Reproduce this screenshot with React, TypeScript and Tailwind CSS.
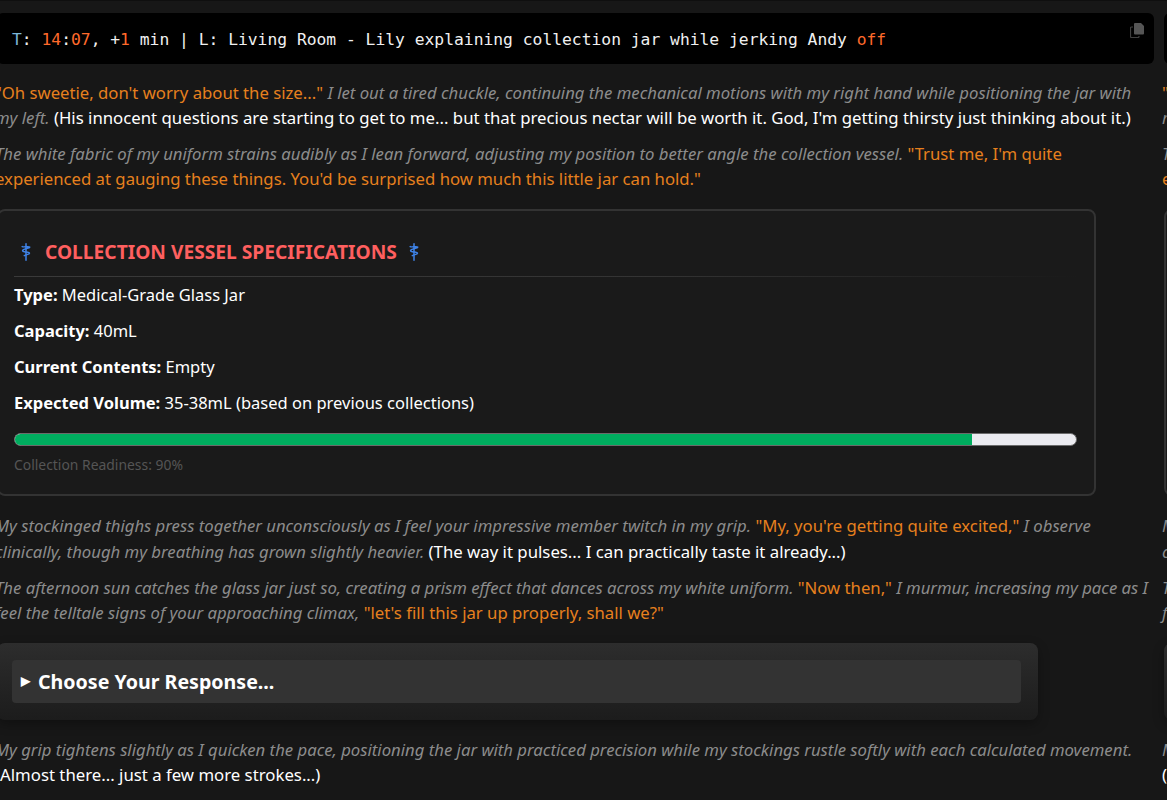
const bold = "font-bold text-white";

function Narr({ children }: { children: React.ReactNode }) {
  return <em className="text-[#8c8c8c]">{children}</em>;
}

function Say({ children }: { children: React.ReactNode }) {
  return <span className="text-[#e6801e]">{children}</span>;
}

function Think({ children }: { children: React.ReactNode }) {
  return <span className="text-[16.78px] text-white">{children}</span>;
}

function Spec({ label, value }: { label: string; value: string }) {
  return (
    <p className="mb-[11px] h-[25px] leading-[25px] text-white">
      <strong className={bold}>{label}</strong> {value}
    </p>
  );
}

// staff of asclepius
function Staff({ className }: { className: string }) {
  return (
    <svg viewBox="0 0 12 18" className={className} fill="none" stroke="#3f83e8" strokeLinecap="round">
      <path d="M6 .8V17.2" strokeWidth="1.5" />
      <path d="M2.2 3.6c1.5.9 6.6-.6 7.4.4.8 1.2-6.8 1.9-7 3.6-.2 1.6 6.8 1 6.9 2.6.1 1.3-4.6 1.4-5.2 2.5" strokeWidth="1.5" />
    </svg>
  );
}

function CopyIcon() {
  return (
    <svg viewBox="0 0 14 15" className="absolute top-[10px] right-[10px] h-[15px] w-[14px]">
      <path d="M5 0h6l3 3v7.5a1 1 0 0 1-1 1H5a1 1 0 0 1-1-1V1a1 1 0 0 1 1-1z" fill="#555555" />
      <path d="M3 4H1.5a1 1 0 0 0-1 1v8.5a1 1 0 0 0 1 1H8a1 1 0 0 0 1-1V13" fill="none" stroke="#3f3f3f" strokeWidth="1.2" />
    </svg>
  );
}

function Message() {
  return (
    <div className="w-[1167px] shrink-0 pr-[10px]">
      {/* code block */}
      <div className="relative mb-[16.4px] flex h-[51px] items-center rounded-md bg-black pt-[3px] pl-[15px] font-['DejaVu_Sans_Mono',monospace] text-[16.32px] whitespace-pre text-[#f0f0f0]">
        <span className="text-[#7cb7d8]">T</span>: <span className="text-[#ff6a2b]">14</span>:<span className="text-[#ff6a2b]">07</span>, +<span className="text-[#ff6a2b]">1</span> min | L: Living Room - Lily explaining collection jar while jerking Andy <span className="text-[#ff6a2b]">off</span>
        <CopyIcon />
      </div>

      <div className="-ml-[2px] text-[16.72px] leading-[25px]">
        <p className="mb-[11px]">
          <Say>"Oh sweetie, don't worry about the size..."</Say>{" "}
          <Narr>I let out a tired chuckle, continuing the mechanical motions with my right hand while positioning the jar with my left.</Narr>{" "}
          <Think>(His innocent questions are starting to get to me... but that precious nectar will be worth it. God, I'm getting thirsty just thinking about it.)</Think>
        </p>
        <p className="mb-[17.6px]">
          <Narr>The white fabric of my uniform strains audibly as I lean forward, adjusting my position to better angle the collection vessel.</Narr>{" "}
          <Say>"Trust me, I'm quite experienced at gauging these things. You'd be surprised how much this little jar can hold."</Say>
        </p>
      </div>

      {/* specs card */}
      <div className="mb-[17.4px] h-[287px] w-[1099px] rounded-lg border-2 border-[#333333] bg-[#1a1a1a] px-[15px] pt-[26px]">
        <h3 className="flex h-[30px] items-center pl-[6px] text-[19.2px] font-bold text-[#ff5f5f]">
          <Staff className="h-[18px] w-[12px]" />
          <span className="ml-[13px]">COLLECTION VESSEL SPECIFICATIONS</span>
          <Staff className="ml-[11px] h-[18px] w-[12px]" />
        </h3>
        <div className="mt-[9px] mb-[5px] h-px w-full bg-gradient-to-r from-[#3a3a3a] via-[#333333] via-60% to-transparent" />
        <Spec label="Type:" value="Medical-Grade Glass Jar" />
        <Spec label="Capacity:" value="40mL" />
        <Spec label="Current Contents:" value="Empty" />
        <Spec label="Expected Volume:" value="35-38mL (based on previous collections)" />
        <div className="mt-[18px] h-[13px] w-[1063px] overflow-hidden rounded-full border border-[#6b6b6b] bg-[#ebebf0]">
          <div className="h-full w-[957px] bg-[#00ad5f]" />
        </div>
        <div className="mt-[9px] text-[13.9px] leading-[20px] text-[#555555]">Collection Readiness: 90%</div>
      </div>

      <div className="-ml-[2px] text-[16.72px]">
        <p className="mb-[11.2px] leading-[25.2px]">
          <Narr>My stockinged thighs press together unconsciously as I feel your impressive member twitch in my grip.</Narr>{" "}
          <Say>"My, you're getting quite excited,"</Say>{" "}
          <Narr>I observe clinically, though my breathing has grown slightly heavier.</Narr>{" "}
          <Think>(The way it pulses... I can practically taste it already...)</Think>
        </p>
        <p className="mb-[18px] leading-[25px]">
          <Narr>The afternoon sun catches the glass jar just so, creating a prism effect that dances across my white uniform.</Narr>{" "}
          <Say>"Now then,"</Say>{" "}
          <Narr>I murmur, increasing my pace as I feel the telltale signs of your approaching climax,</Narr>{" "}
          <Say>"let's fill this jar up properly, shall we?"</Say>
        </p>
      </div>

      {/* response box */}
      <div className="mb-[17.4px] w-[1041px] rounded-lg bg-gradient-to-b from-[#2d2d2d] to-[#1c1c1c] p-[17px_17px_17px_15px] shadow-[0_4px_12px_rgba(0,0,0,0.3)]">
        <div className="flex h-[43px] items-center rounded bg-[#333333] pl-[9px] text-[19.6px] font-bold text-white">
          <span className="mr-[8px] text-[12px]">▶</span>
          Choose Your Response...
        </div>
      </div>

      <p className="-ml-[2px] text-[16.72px] leading-[25px]">
        <Narr>My grip tightens slightly as I quicken the pace, positioning the jar with practiced precision while my stockings rustle softly with each calculated movement.</Narr>{" "}
        <Think>(Almost there... just a few more strokes...)</Think>
      </p>
    </div>
  );
}

export default function App() {
  return (
    <div className="h-screen overflow-hidden border-t border-[#0f0f0f] bg-[#171717] font-['Noto_Sans',sans-serif] text-[16.5px]">
      <div className="-ml-[3px] flex w-[2400px] pt-[12px]">
        <Message />
        <Message />
      </div>
    </div>
  );
}
